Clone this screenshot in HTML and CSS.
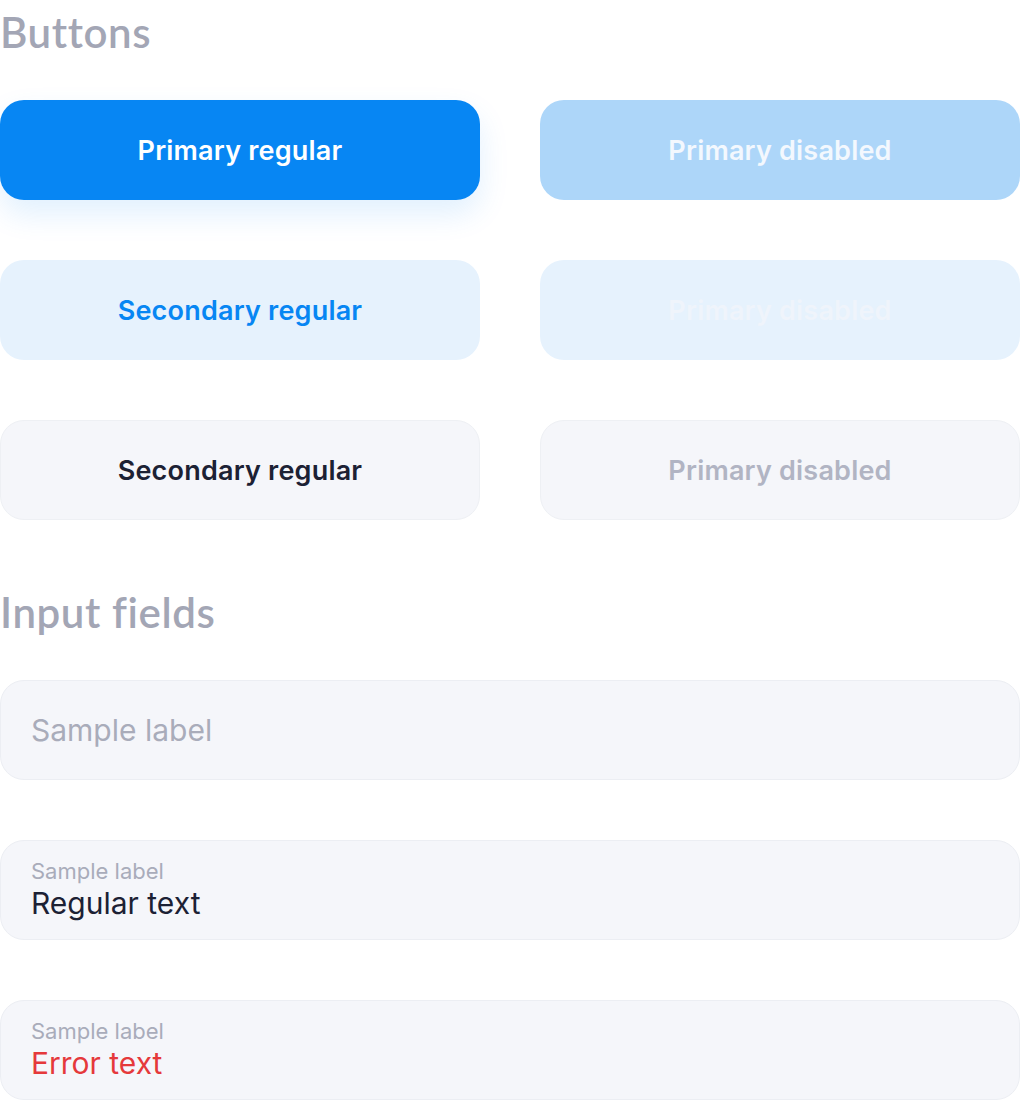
FILE: index.html
```html
<!DOCTYPE html>
<html>
<head>
<meta charset="utf-8">
<link rel="stylesheet" href="styles.css">
</head>
<body>
<div class="page">
  <h2 class="section-title">Buttons</h2>
  <div class="button-grid">
    <button class="btn btn-primary">Primary regular</button>
    <button class="btn btn-primary-disabled">Primary disabled</button>
    <button class="btn btn-secondary">Secondary regular</button>
    <button class="btn btn-secondary-disabled">Primary disabled</button>
    <button class="btn btn-tertiary">Secondary regular</button>
    <button class="btn btn-tertiary-disabled">Primary disabled</button>
  </div>
  <h2 class="section-title section-title-inputs">Input fields</h2>
  <div class="inputs">
    <div class="field field-empty"><span class="placeholder">Sample label</span></div>
    <div class="field"><span class="label">Sample label</span><span class="value">Regular text</span></div>
    <div class="field"><span class="label">Sample label</span><span class="value value-error">Error text</span></div>
  </div>
</div>
</body>
</html>
```
FILE: styles.css
```css
* { box-sizing: border-box; }
html, body { margin: 0; padding: 0; background: #ffffff; }
body { font-family: Inter, "Noto Sans", sans-serif; }
.page { width: 1020px; display: flex; flex-direction: column; }
.section-title {
  margin: 0;
  font-family: Lato, "Noto Sans", sans-serif;
  font-weight: 600;
  font-size: 42px;
  letter-spacing: 0.6px;
  line-height: 64px;
  color: #a3a6b5;
  height: 64px;
  margin-bottom: 36px;
}
.section-title-inputs { margin-top: 60px; margin-bottom: 36px; }
.button-grid {
  display: grid;
  grid-template-columns: 480px 480px;
  column-gap: 60px;
  row-gap: 60px;
}
.btn {
  height: 100px;
  border-radius: 24px;
  border: none;
  font-family: Inter, sans-serif;
  font-size: 27px;
  font-weight: 600;
  letter-spacing: 0.2px;
  padding: 0;
  display: flex;
  align-items: center;
  justify-content: center;
}
.btn-primary { background: #0786f3; color: #ffffff; box-shadow: 0 14px 30px rgba(7, 134, 243, 0.12); }
.btn-primary-disabled { background: #add6f9; color: #f3f8fe; }
.btn-secondary { background: #e6f2fd; color: #0786f3; }
.btn-secondary-disabled { background: #e6f2fd; color: #eff4fb; }
.btn-tertiary { background: #f5f6fa; color: #1c2134; border: 1px solid #eef0f4; }
.btn-tertiary-disabled { background: #f5f6fa; color: #b1b4c3; border: 1px solid #eef0f4; }
.inputs { display: flex; flex-direction: column; gap: 60px; }
.field {
  height: 100px;
  border-radius: 24px;
  background: #f5f6fa;
  border: 1px solid #eceef3;
  padding: 0 30px;
  display: flex;
  flex-direction: column;
  justify-content: center;
}
.placeholder { font-size: 30px; color: #a9acba; line-height: 36px; }
.label { font-size: 22px; color: #a9acba; line-height: 26px; }
.value { font-size: 30px; color: #1c2134; line-height: 38px; }
.value-error { color: #e5393b; }
```
